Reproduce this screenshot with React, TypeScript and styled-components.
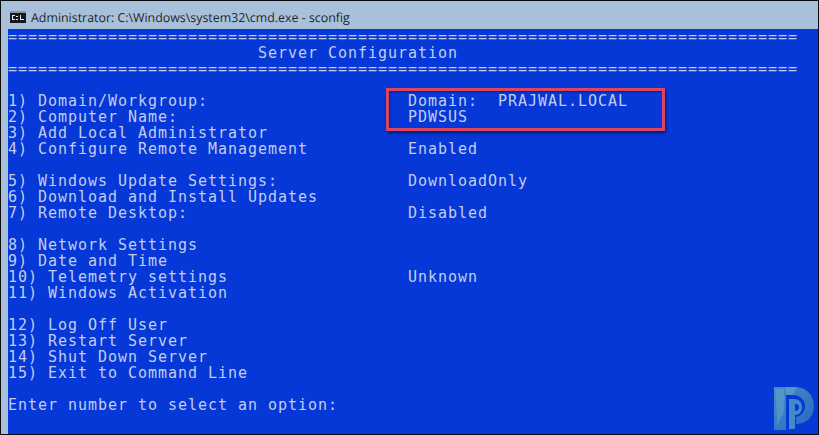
import React from "react";
import styled, { createGlobalStyle } from "styled-components";

const GlobalStyle = createGlobalStyle`
  html, body {
    margin: 0;
    padding: 0;
    background: #0a0a0a;
  }
`;

const Window = styled.div`
  position: relative;
  width: 817px;
  height: 433px;
  margin-top: 1px;
  margin-left: 1px;
  overflow: hidden;
  background: #a9c0da;
  display: flex;
  flex-direction: column;
`;

const TitleBar = styled.div`
  height: 28px;
  flex-shrink: 0;
  display: flex;
  align-items: center;
  gap: 5px;
  padding-left: 9px;
  padding-top: 4px;
  box-sizing: border-box;
  font-family: "Open Sans", "Noto Sans", sans-serif;
  font-size: 12.4px;
  text-rendering: geometricPrecision;
  color: #22262c;
`;

const Console = styled.div`
  flex-grow: 1;
  margin-left: 7px;
  background: #0538d6;
  font-family: "DejaVu Sans Mono", monospace;
  font-size: 15px;
  letter-spacing: 0.97px;
  line-height: 16px;
  color: #c2cdee;
  white-space: pre;
`;

const Row = styled.div`
  height: 16px;
  display: grid;
  grid-template-columns: 400px 1fr;
`;

const Rule = styled.div`
  height: 16px;
  overflow: hidden;
`;

const Highlight = styled.div`
  position: absolute;
  left: 385px;
  top: 87px;
  width: 279px;
  height: 43px;
  box-sizing: border-box;
  border: 3px solid #dc4560;
  box-shadow: 1px 2px 3px rgba(0, 0, 30, 0.55), inset 1px 1px 2px rgba(0, 0, 30, 0.4);
`;

const Logo = styled.svg`
  position: absolute;
  right: 3px;
  bottom: 3px;
`;

const CmdIcon = () => (
  <svg width="16" height="12" viewBox="0 0 16 12">
    <rect x="0" y="0" width="16" height="12" fill="#15181c" />
    <rect x="0" y="0" width="16" height="2" fill="#8a94a0" />
    <rect x="2" y="4" width="3" height="1" fill="#e8e8e8" />
    <rect x="2" y="5" width="1" height="3" fill="#e8e8e8" />
    <rect x="2" y="8" width="3" height="1" fill="#e8e8e8" />
    <rect x="6" y="5" width="2" height="1" fill="#e8e8e8" />
    <rect x="6" y="8" width="2" height="1" fill="#e8e8e8" />
    <rect x="10" y="4" width="1" height="5" fill="#e8e8e8" />
    <rect x="11" y="8" width="3" height="1" fill="#e8e8e8" />
  </svg>
);

const rule = "=".repeat(79);

const rows: [string, string][] = [
  ["", ""],
  ["1) Domain/Workgroup:", "Domain:  PRAJWAL.LOCAL"],
  ["2) Computer Name:", "PDWSUS"],
  ["3) Add Local Administrator", ""],
  ["4) Configure Remote Management", "Enabled"],
  ["", ""],
  ["5) Windows Update Settings:", "DownloadOnly"],
  ["6) Download and Install Updates", ""],
  ["7) Remote Desktop:", "Disabled"],
  ["", ""],
  ["8) Network Settings", ""],
  ["9) Date and Time", ""],
  ["10) Telemetry settings", "Unknown"],
  ["11) Windows Activation", ""],
  ["", ""],
  ["12) Log Off User", ""],
  ["13) Restart Server", ""],
  ["14) Shut Down Server", ""],
  ["15) Exit to Command Line", ""],
  ["", ""],
  ["Enter number to select an option:", ""],
];

export default function App() {
  return (
    <>
      <GlobalStyle />
      <Window>
        <TitleBar>
          <CmdIcon />
          <span>Administrator: C:\Windows\system32\cmd.exe - sconfig</span>
        </TitleBar>
        <Console>
          <Rule>{rule}</Rule>
          <Rule>{" ".repeat(25)}Server Configuration</Rule>
          <Rule>{rule}</Rule>
          {rows.map((row, idx) => (
            <Row key={`row${idx}`}>
              <span>{row[0]}</span>
              <span>{row[1]}</span>
            </Row>
          ))}
        </Console>
        <Highlight />
        <Logo width="42" height="45" viewBox="0 0 42 45">
          <defs>
            <linearGradient id="logoOuter" x1="0" y1="0" x2="1" y2="1">
              <stop offset="0" stopColor="#468fc4" />
              <stop offset="1" stopColor="#2468c2" />
            </linearGradient>
          </defs>
          <path
            d="M1 1 H22 C34 1 41 10 41 20 C41 31 33 38 23 38 V31 C28 30 32 26 32 20 C32 13 26 9 20 9 H13 V44 H1 Z"
            fill="url(#logoOuter)"
          />
          <path d="M3 3 L11 3 L11 26 L4 40 Z" fill="#6aa9d0" opacity="0.45" />
          <path d="M13 1 H24 L20 9 H13 Z" fill="#6aa9d0" opacity="0.5" />
          <path
            fillRule="evenodd"
            d="M16 13 H21 C26 13 29 16 29 21 C29 26 26 29 22 29 V43 H16 Z M22 18 V25 C25 25 26 23 26 21 C26 19 25 18 22 18 Z"
            fill="#3f8cc8"
          />
        </Logo>
      </Window>
    </>
  );
}
